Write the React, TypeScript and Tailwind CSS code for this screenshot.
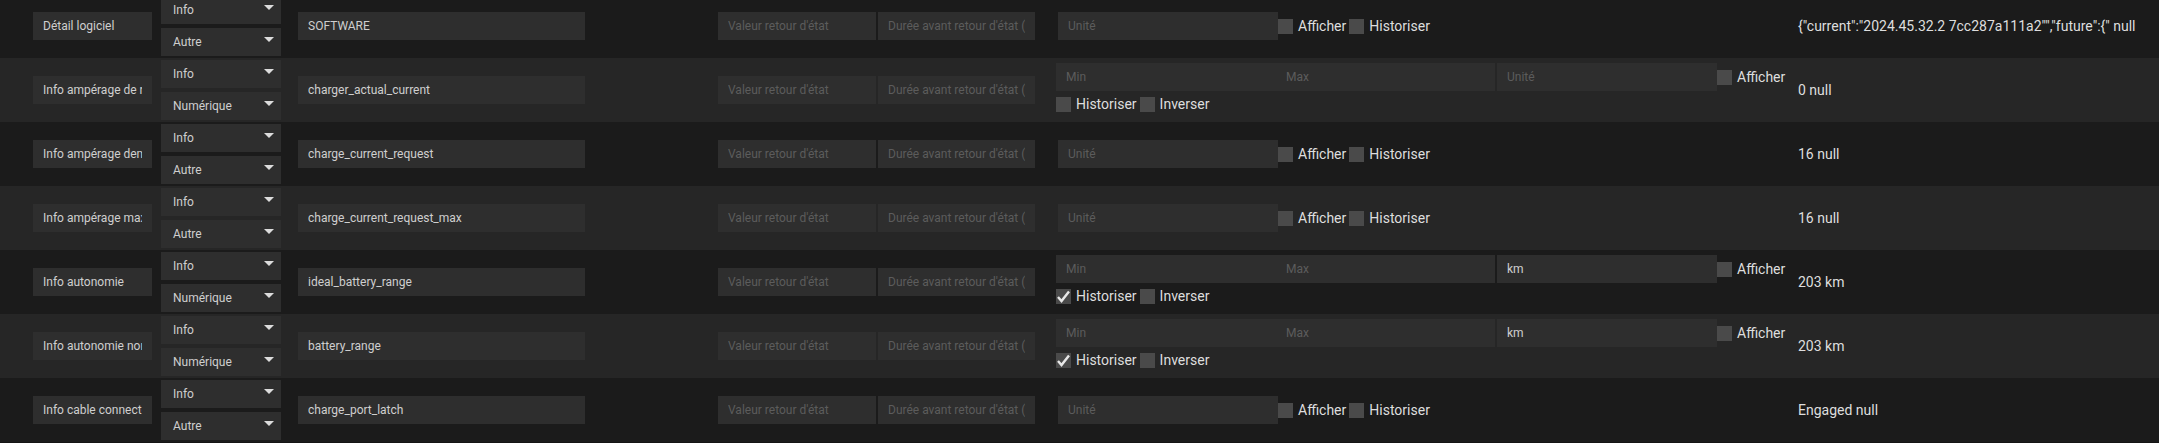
type Cmd = {
  name: string;
  type: string;
  logicalId: string;
  minmax: boolean;
  unit: string;
  historize: boolean;
  value: string;
};

const cmds: Cmd[] = [
  { name: "Détail logiciel", type: "Autre", logicalId: "SOFTWARE", minmax: false, unit: "", historize: false, value: '{"current":"2024.45.32.2 7cc287a111a2"","future":{" null' },
  { name: "Info ampérage de recharge", type: "Numérique", logicalId: "charger_actual_current", minmax: true, unit: "", historize: false, value: "0 null" },
  { name: "Info ampérage demandé", type: "Autre", logicalId: "charge_current_request", minmax: false, unit: "", historize: false, value: "16 null" },
  { name: "Info ampérage max", type: "Autre", logicalId: "charge_current_request_max", minmax: false, unit: "", historize: false, value: "16 null" },
  { name: "Info autonomie", type: "Numérique", logicalId: "ideal_battery_range", minmax: true, unit: "km", historize: true, value: "203 km" },
  { name: "Info autonomie nominale", type: "Numérique", logicalId: "battery_range", minmax: true, unit: "km", historize: true, value: "203 km" },
  { name: "Info cable connecté", type: "Autre", logicalId: "charge_port_latch", minmax: false, unit: "", historize: false, value: "Engaged null" },
];

function Field({ value, placeholder, className }: { value?: string; placeholder?: string; className: string }) {
  return (
    <input
      readOnly
      value={value ?? ""}
      placeholder={placeholder}
      className={`h-7 bg-[#2e2e2e] px-[10px] text-[12px] text-[#cfcfcf] placeholder:text-[#5c5c5c] outline-none ${className}`}
    />
  );
}

function Select({ label }: { label: string }) {
  return (
    <div className="flex h-7 w-[120px] items-start justify-between bg-[#2e2e2e] pl-3 pr-[7px]">
      <span className="self-center text-[12px] text-[#cfcfcf]">{label}</span>
      <svg width="10" height="5" viewBox="0 0 10 5" className="mt-[9px]">
        <polygon points="0,0 10,0 5,5" fill="#dcdcdc" />
      </svg>
    </div>
  );
}

function Check({ label, checked }: { label: string; checked?: boolean }) {
  return (
    <label className="flex items-center text-[14px] text-[#dedede]">
      <span className="relative flex h-[15px] w-[15px] shrink-0 items-center justify-center bg-[#4a4a4a]">
        {checked && (
          <svg width="15" height="15" viewBox="0 0 15 15" className="absolute">
            <polyline points="2,8 5.5,12 13,2.5" fill="none" stroke="#e8e8e8" strokeWidth="2.4" />
          </svg>
        )}
      </span>
      <span className="ml-[5px] mr-[3px]">{label}</span>
    </label>
  );
}

function Row({ cmd, index }: { cmd: Cmd; index: number }) {
  return (
    <div className={`flex h-16 items-center pl-[33px] ${index % 2 ? "bg-[#262626]" : "bg-[#1b1b1b]"}`}>
      <Field value={cmd.name} className="w-[119px]" />
      <div className="ml-[9px] flex flex-col gap-1">
        <Select label="Info" />
        <Select label={cmd.type} />
      </div>
      <Field value={cmd.logicalId} className="ml-[17px] w-[287px]" />
      <Field placeholder="Valeur retour d'état" className="ml-[133px] w-[158px]" />
      <Field placeholder="Durée avant retour d'état (min)" className="ml-[2px] w-[157px]" />
      {cmd.minmax ? (
        <div className="w-[763px] self-start pl-[21px] pt-[5px]">
          <div className="flex items-center">
            <Field placeholder="Min" className="w-[220px]" />
            <Field placeholder="Max" className="w-[219px]" />
            <Field value={cmd.unit} placeholder="Unité" className="ml-[2px] w-[220px]" />
            <Check label="Afficher" />
          </div>
          <div className="mt-[3px] flex items-center">
            <Check label="Historiser" checked={cmd.historize} />
            <Check label="Inverser" />
          </div>
        </div>
      ) : (
        <div className="flex w-[763px] items-center pl-[23px]">
          <Field value={cmd.unit} placeholder="Unité" className="w-[220px]" />
          <Check label="Afficher" />
          <Check label="Historiser" />
        </div>
      )}
      <div className="whitespace-nowrap text-[14px] text-[#dedede]">{cmd.value}</div>
    </div>
  );
}

export default function App() {
  return (
    <div className="h-screen overflow-hidden bg-[#141414] font-['Roboto',sans-serif]">
      <div className="-mt-[6px]">
        {cmds.map((c, i) => (
          <Row key={c.logicalId} cmd={c} index={i} />
        ))}
      </div>
    </div>
  );
}
